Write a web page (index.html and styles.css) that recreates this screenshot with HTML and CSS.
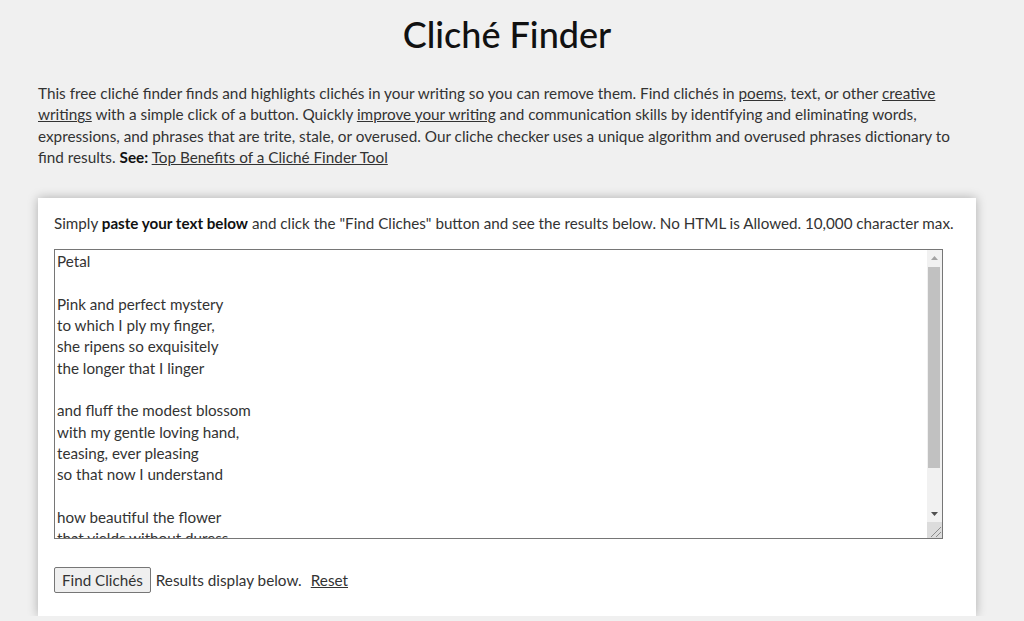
FILE: index.html
```html
<!DOCTYPE html>
<html lang="en">
<head>
<meta charset="utf-8">
<title>Cliché Finder</title>
<link rel="stylesheet" href="styles.css">
</head>
<body>
<div class="page">
  <main class="container">
    <h1 class="title">Cliché Finder</h1>
    <p class="intro">This free cliché finder finds and highlights clichés in your writing so you can remove them. Find clichés in <a href="#">poems</a>, text, or other <a href="#">creative writings</a> with a simple click of a button. Quickly <a href="#">improve your writing</a> and communication skills by identifying and eliminating words, expressions, and phrases that are trite, stale, or overused. Our cliche checker uses a unique algorithm and overused phrases dictionary to find results. <strong>See:</strong> <a href="#">Top Benefits of a Cliché Finder Tool</a></p>
    <section class="card">
      <p class="hint">Simply <strong>paste your text below</strong> and click the "Find Cliches" button and see the results below. No HTML is Allowed. 10,000 character max.</p>
      <div class="field">
        <textarea class="input">Petal

Pink and perfect mystery
to which I ply my finger,
she ripens so exquisitely
the longer that I linger

and fluff the modest blossom
with my gentle loving hand,
teasing, ever pleasing
so that now I understand

how beautiful the flower
that yields without duress
and opens to the morning
in quiet tenderness</textarea>
        <div class="scrollbar" aria-hidden="true">
          <div class="sb-btn">
            <svg width="15" height="16" viewBox="0 0 15 16"><path d="M4 10 L7.5 6 L11 10 Z" fill="#a3a3a3"/></svg>
          </div>
          <div class="sb-track"><div class="sb-thumb"></div></div>
          <div class="sb-btn">
            <svg width="15" height="16" viewBox="0 0 15 16"><path d="M4 6 L11 6 L7.5 10 Z" fill="#505050"/></svg>
          </div>
          <div class="sb-corner">
            <svg width="15" height="16" viewBox="0 0 15 16"><path d="M14 5 L4 15 M14 10 L9 15" stroke="#8c8c8c" stroke-width="1"/></svg>
          </div>
        </div>
      </div>
      <div class="actions">
        <button class="btn" type="button">Find Clichés</button>
        <span class="status">Results display below.</span>
        <a href="#" class="reset">Reset</a>
      </div>
    </section>
  </main>
</div>
</body>
</html>
```

FILE: styles.css
```css
html, body {
  margin: 0;
  padding: 0;
  background: #f0f0f0;
}
body {
  font-family: "Lato", "Liberation Sans", sans-serif;
  color: #333;
  font-size: 15.3px;
}
.page {
  padding-right: 10px;
}
.container {
  width: 938px;
  margin: 0 auto;
}
.title {
  margin: 0;
  padding-top: 13px;
  text-align: center;
  font-weight: 500;
  font-size: 36px;
  line-height: 42px;
  color: #111;
}
.intro {
  margin: 28px 0 0;
  line-height: 21.3px;
}
.intro a, .reset {
  color: #333;
  text-decoration: underline;
}
.intro strong, .hint strong {
  color: #111;
  font-weight: 700;
}
.card {
  margin-top: 30px;
  background: #fff;
  box-shadow: 0 0 10px rgba(0,0,0,0.28);
  padding: 15px 16px 23px;
}
.hint {
  margin: 0;
  line-height: 21px;
  font-size: 15.2px;
}
.field {
  position: relative;
  width: 889px;
  height: 290px;
  margin-top: 15px;
}
.input {
  display: block;
  width: 100%;
  height: 100%;
  box-sizing: border-box;
  padding: 1px 18px 1px 2px;
  border: 1px solid #767676;
  font-family: inherit;
  font-size: 15.2px;
  line-height: 21.3px;
  color: #333;
  overflow: hidden;
  resize: none;
}
.scrollbar {
  position: absolute;
  top: 1px;
  right: 1px;
  bottom: 1px;
  width: 15px;
  background: #f1f1f1;
  display: flex;
  flex-direction: column;
}
.sb-btn {
  height: 16px;
  flex: none;
}
.sb-btn svg, .sb-corner svg {
  display: block;
}
.sb-track {
  flex: 1;
  padding: 1px 2px 0 1px;
}
.sb-thumb {
  height: 201px;
  background: #c1c1c1;
}
.sb-corner {
  height: 16px;
  flex: none;
  background: #dcdcdc;
}
.actions {
  margin-top: 28px;
  display: flex;
  align-items: center;
}
.btn {
  font-family: inherit;
  font-size: 15.2px;
  color: #333;
  background: #efefef;
  border: 1px solid #767676;
  border-radius: 2px;
  height: 26px;
  padding: 0 7px;
}
.status {
  margin-left: 5px;
}
.reset {
  margin-left: 9px;
}
```
